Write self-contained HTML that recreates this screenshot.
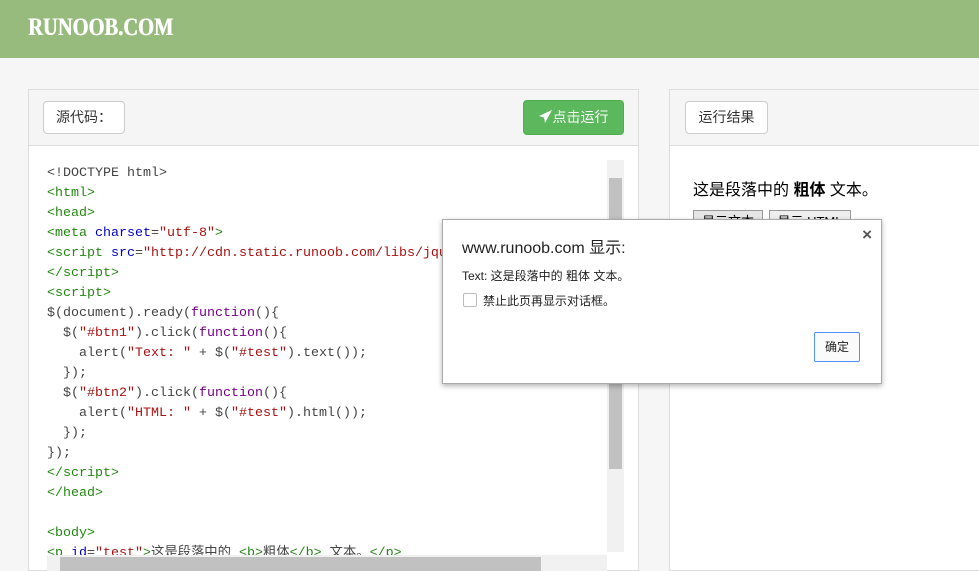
<!DOCTYPE html>
<html><head><meta charset="utf-8"><style>
body{margin:0;width:979px;height:562px;overflow:hidden;background:#f6f6f6;font-family:"Liberation Sans","Noto Sans CJK SC",sans-serif;position:relative}
.hdr{position:absolute;left:0;top:0;width:979px;height:58px;background:#96bb7c}
.logo{position:absolute;left:28px;top:14px;color:#fff;font:bold 25px "Liberation Serif",serif;transform:scaleX(0.82);transform-origin:left;text-shadow:0.6px 0 0 #fff}
.panel{position:absolute;top:89px;border:1px solid #ddd;background:#fff}
.ph{position:absolute;left:0;top:0;right:0;height:55px;background:#f5f5f5;border-bottom:1px solid #ddd}
.btn{position:absolute;border:1px solid #ccc;border-radius:4px;background:#fff;font-size:14px;color:#333;text-align:center;box-sizing:border-box;line-height:30px}
pre{position:absolute;left:18px;top:74px;margin:0;font:13.33px/20px "Liberation Mono","Noto Sans CJK SC",monospace;color:#444}
.t{color:#281}.a{color:#00c}.s{color:#a11}.k{color:#708}
.dlg{position:absolute;left:442px;top:219px;width:438px;height:163px;background:#fff;border:1px solid #aaa;box-shadow:0 2px 5px rgba(0,0,0,.3)}
</style></head><body>
<div class="hdr"><div class="logo">RUNOOB.COM</div></div>
<div class="panel" style="left:28px;width:609px;height:480px">
<div class="ph"></div>
<div class="btn" style="left:14px;top:11px;width:82px;height:33px">源代码：</div>
<div class="btn" style="left:494px;top:10px;width:101px;height:35px;background:#5cb85c;border-color:#4cae4c;color:#fff;line-height:33px"><svg width="14" height="13" viewBox="0 0 14 13" style="vertical-align:-1px"><path d="M13 0L0 6l5 1.5L6 13z" fill="#fff"/></svg>点击运行</div>
<pre>&lt;!DOCTYPE html&gt;
<span class="t">&lt;html&gt;</span>
<span class="t">&lt;head&gt;</span>
<span class="t">&lt;meta</span> <span class="a">charset</span>=<span class="s">"utf-8"</span><span class="t">&gt;</span>
<span class="t">&lt;script</span> <span class="a">src</span>=<span class="s">"http://cdn.static.runoob.com/libs/jquery</span>
<span class="t">&lt;/script&gt;</span>
<span class="t">&lt;script&gt;</span>
$(document).ready(<span class="k">function</span>(){
  $(<span class="s">"#btn1"</span>).click(<span class="k">function</span>(){
    alert(<span class="s">"Text: "</span> + $(<span class="s">"#test"</span>).text());
  });
  $(<span class="s">"#btn2"</span>).click(<span class="k">function</span>(){
    alert(<span class="s">"HTML: "</span> + $(<span class="s">"#test"</span>).html());
  });
});
<span class="t">&lt;/script&gt;</span>
<span class="t">&lt;/head&gt;</span>

<span class="t">&lt;body&gt;</span>
<span class="t">&lt;p</span> <span class="a">id</span>=<span class="s">"test"</span><span class="t">&gt;</span>这是段落中的 <span class="t">&lt;b&gt;</span>粗体<span class="t">&lt;/b&gt;</span> 文本。<span class="t">&lt;/p&gt;</span></pre>
<div style="position:absolute;left:578px;top:70px;width:17px;height:392px;background:#f1f1f1"></div>
<div style="position:absolute;left:580px;top:88px;width:13px;height:291px;background:#c1c1c1"></div>
<div style="position:absolute;left:18px;top:465px;width:560px;height:16px;background:#f1f1f1"></div>
<div style="position:absolute;left:31px;top:467px;width:481px;height:14px;background:#c1c1c1"></div>
</div>
<div class="panel" style="left:669px;width:330px;height:480px">
<div class="ph"></div>
<div class="btn" style="left:15px;top:11px;width:83px;height:33px">运行结果</div>
<div style="position:absolute;left:23px;top:86px;font-size:16px;color:#000">这是段落中的 <b>粗体</b> 文本。</div>
<div style="position:absolute;left:23px;top:120px;width:68px;height:20px;border:1px solid #999;background:#e6e6e6;font-size:13px;text-align:center">显示文本</div>
<div style="position:absolute;left:99px;top:120px;width:80px;height:20px;border:1px solid #999;background:#eee;font-size:13px;text-align:center">显示 HTML</div>
</div>
<div class="dlg">
<div style="position:absolute;left:19px;top:14px;font-size:16px;color:#222">www.runoob.com 显示:</div>
<div style="position:absolute;right:9px;top:5px;font-size:17px;color:#555;font-weight:bold">×</div>
<div style="position:absolute;left:19px;top:47px;font-size:12px;color:#222">Text: 这是段落中的 粗体 文本。</div>
<div style="position:absolute;left:20px;top:73px;width:12px;height:12px;border:1px solid #bbb;border-radius:2px"></div>
<div style="position:absolute;left:40px;top:72px;font-size:12px;color:#222">禁止此页再显示对话框。</div>
<div style="position:absolute;left:371px;top:112px;width:44px;height:28px;border:1px solid #4d90fe;border-radius:2px;font-size:12px;line-height:28px;text-align:center;color:#222;background:#fafafa">确定</div>
</div>
</body></html>
